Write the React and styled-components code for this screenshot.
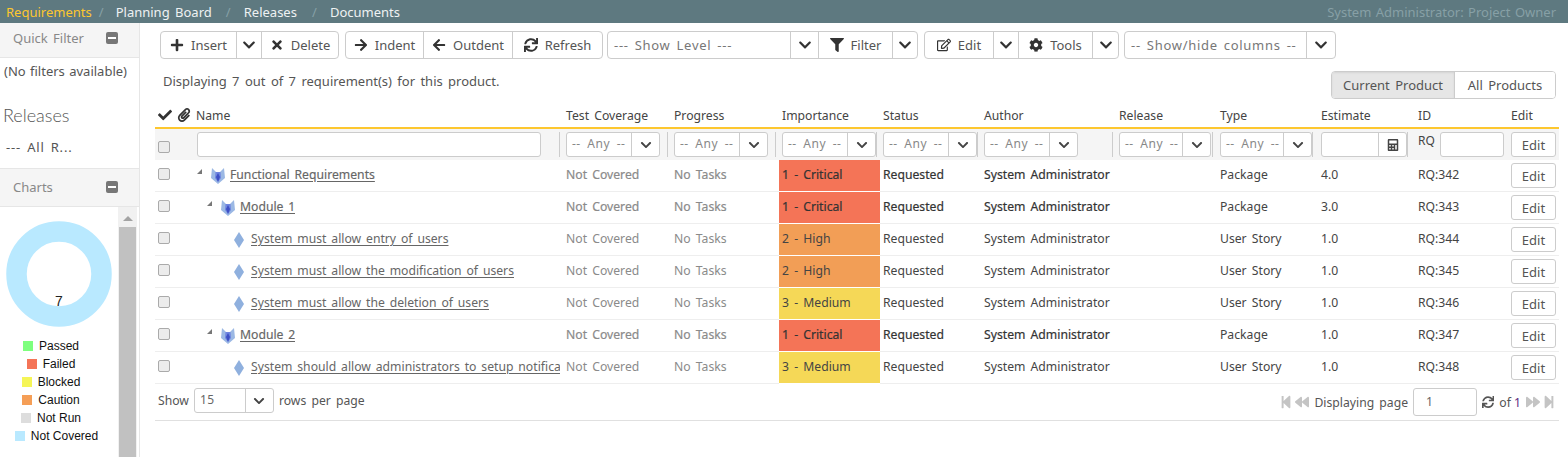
import React from 'react';
import styled, { createGlobalStyle } from 'styled-components';
import {
  FaPlus, FaTimes, FaArrowRight, FaArrowLeft, FaSync, FaFilter, FaRegEdit, FaCog, FaCheck,
  FaPaperclip, FaCalculator, FaStepBackward, FaBackward, FaForward, FaStepForward, FaChevronDown,
} from 'react-icons/fa';

const GlobalStyle = createGlobalStyle`
  html, body { margin: 0; padding: 0; height: 100%; overflow: hidden; background: #fff; }
  body { font-family: "Noto Sans", sans-serif; font-size: 13px; color: #555; word-spacing: 2px; }
  * { box-sizing: border-box; }
`;

const Page = styled.div`
  display: flex;
  flex-direction: column;
  height: 457px;
  overflow: hidden;
`;

const TopBar = styled.div`
  display: flex;
  align-items: center;
  justify-content: space-between;
  flex: 0 0 23px;
  padding: 0 6px;
  background: #5e7980;
  color: #e8eef0;
`;

const Crumbs = styled.div`
  display: flex;
  align-items: center;
`;

const Crumb = styled.span`
  color: ${p => (p.$active ? '#fdc72f' : '#eef2f3')};
`;

const CrumbSep = styled.span`
  color: #86a0a6;
  width: ${p => p.$w}px;
  padding-left: ${p => p.$pl}px;
`;

const UserRole = styled.span`
  color: #87a0a6;
  margin-right: 6px;
  word-spacing: 1px;
`;

const Body = styled.div`
  display: flex;
  flex: 1;
  min-height: 0;
`;

const Sidebar = styled.aside`
  flex: 0 0 140px;
  display: flex;
  flex-direction: column;
  border-right: 1px solid #e6e6e6;
  overflow: hidden;
`;

const PanelHead = styled.div`
  display: flex;
  align-items: center;
  justify-content: space-between;
  flex: 0 0 35px;
  padding: 0 21px 4px 13px;
  background: #f5f5f5;
  border-bottom: 1px solid #e6e6e6;
  color: #888;
`;

const Collapse = styled.span`
  display: flex;
  align-items: center;
  justify-content: center;
  width: 12px;
  height: 12px;
  border-radius: 2px;
  background: #777;
  &::before {
    content: '';
    width: 8px;
    height: 2px;
    background: #fff;
  }
`;

const SideNote = styled.div`
  padding: 4px 0 0 4px;
  height: 36px;
  white-space: nowrap;
  word-spacing: 1px;
`;

const SideTitle = styled.div`
  font-family: "Lato", sans-serif;
  font-weight: 300;
  font-size: 18px;
  padding-left: 3px;
  height: 38px;
  line-height: 42px;
  color: #555;
`;

const ReleasePick = styled.div`
  padding-left: 6px;
  height: 37px;
  line-height: 30px;
  letter-spacing: 0.8px;
  border-bottom: 1px solid #e6e6e6;
`;

const SideGap = styled.div`
  flex: 0 0 3px;
  background: #f5f5f5;
`;

const ChartArea = styled.div`
  display: flex;
  flex: 1;
  min-height: 0;
`;

const ChartBox = styled.div`
  flex: 0 0 118px;
  display: flex;
  flex-direction: column;
  align-items: center;
  padding-top: 14px;
`;

const Legend = styled.div`
  display: flex;
  flex-direction: column;
  align-items: center;
  margin-top: 10px;
  font-family: "Liberation Sans", sans-serif;
  font-size: 12px;
  color: #111;
  word-spacing: 0;
`;

const LegendRow = styled.div`
  display: flex;
  align-items: center;
  gap: 6px;
  height: 18px;
  margin-right: ${p => p.$mr}px;
`;

const Swatch = styled.i`
  width: 10px;
  height: 10px;
  background: ${p => p.$c};
`;

const ScrollTrack = styled.div`
  flex: 0 0 19px;
  display: flex;
  flex-direction: column;
  align-items: center;
  background: #f1f1f1;
  padding-top: 9px;
  &::before {
    content: '';
    border: 5px solid transparent;
    border-top: 0;
    border-bottom: 5px solid #a3a3a3;
  }
`;

const ScrollThumb = styled.div`
  width: 17px;
  flex: 1;
  margin-top: 6px;
  background: #c1c1c1;
`;

const Main = styled.main`
  flex: 1;
  min-width: 0;
  padding: 8px 9px 0 15px;
`;

const Toolbar = styled.div`
  display: flex;
  padding-left: 5px;
`;

const BtnGroup = styled.div`
  display: flex;
  height: 28px;
  margin-left: ${p => p.$ml || 0}px;
  border: 1px solid #ccc;
  border-radius: 4px;
  overflow: hidden;
  background: #fff;
`;

const Btn = styled.div`
  display: flex;
  align-items: center;
  justify-content: center;
  gap: 7px;
  width: ${p => p.$w}px;
  border-left: 1px solid #ccc;
  color: #555;
  white-space: nowrap;
  &:first-child { border-left: 0; }
  svg { color: #333; font-size: 14px; flex: none; }
`;

const Caret = styled(Btn)`
  svg { font-size: 14px; }
`;

const ToolSelect = styled(Btn)`
  justify-content: flex-start;
  padding-left: 6px;
  color: #777;
  letter-spacing: 0.7px;
`;

const InfoRow = styled.div`
  display: flex;
  align-items: flex-start;
  justify-content: space-between;
  height: 44px;
  padding: 13px 3px 0 8px;
`;

const Toggle = styled(BtnGroup)`
  margin-top: -1px;
`;

const ToggleBtn = styled(Btn)`
  background: ${p => (p.$on ? '#e6e6e6' : '#fff')};
  box-shadow: ${p => (p.$on ? 'inset 0 1px 2px rgba(0,0,0,0.08)' : 'none')};
`;

const Table = styled.table`
  width: 1404px;
  table-layout: fixed;
  border-collapse: separate;
  border-spacing: 0;
  font-size: 12.2px;
`;

const Head = styled.th`
  height: 26px;
  padding: 0 3px;
  text-align: left;
  font-weight: 400;
  color: #444;
  border-bottom: 2px solid #fdc72f;
  white-space: nowrap;
  overflow: hidden;
  svg { font-size: 14px; color: #333; margin-right: 5px; vertical-align: -2px; }
`;

const FilterRow = styled.tr`
  background: #f5f5f5;
`;

const FilterTd = styled.td`
  height: 31px;
  padding: 0;
`;

const FilterCell = styled.div`
  display: flex;
  align-items: center;
  gap: ${p => p.$gap || 0}px;
  height: 25px;
  padding-left: ${p => p.$pl ?? 3}px;
  margin-right: ${p => p.$mr ?? 3}px;
  border-right: ${p => (p.$line === false ? 0 : '1px solid #ccc')};
`;

const Checkbox = styled.span`
  display: block;
  width: 12px;
  height: 12px;
  margin: ${p => p.$dy}px 0 0 3px;
  border: 1px solid #aaa;
  border-radius: 2px;
  background: #ececec;
`;

const TextBox = styled.div`
  width: ${p => p.$w}px;
  height: 25px;
  border: 1px solid #ccc;
  border-radius: 3px;
  background: #fff;
`;

const AnySelect = styled.div`
  display: flex;
  width: ${p => p.$w || 94}px;
  height: 25px;
  border: 1px solid #ccc;
  border-radius: 3px;
  background: #fff;
  color: #888;
`;

const AnyLabel = styled.span`
  flex: 1;
  padding-left: 5px;
  line-height: 21px;
  white-space: nowrap;
  overflow: hidden;
  font-size: 12px;
  letter-spacing: 0.5px;
  word-spacing: 3px;
`;

const AnyCaret = styled.span`
  flex: 0 0 28px;
  display: flex;
  align-items: center;
  justify-content: center;
  border-left: 1px solid #ccc;
  color: #444;
  font-size: 12px;
`;

const RqLabel = styled.span`
  color: #444;
  font-size: 12px;
  align-self: flex-start;
`;

const Cell = styled.td`
  height: 32px;
  padding: 0 3px 2px;
  white-space: nowrap;
  overflow: hidden;
  border-bottom: 1px solid #eee;
  color: ${p => (p.$muted ? '#8a8a8a' : p.$strong ? '#333' : '#444')};
  -webkit-text-stroke: ${p => (p.$strong ? '0.2px' : '0')};
`;

const CheckCell = styled(Cell)`
  padding: 0;
`;

const EditCell = styled(Cell)`
  padding: 3px 3px 0;
  vertical-align: top;
`;

const ImportanceCell = styled(Cell)`
  background: ${p => p.$c};
  border-bottom-color: #fff;
`;

const NameWrap = styled.div`
  display: flex;
  align-items: center;
  padding-left: ${p => p.$indent}px;
  overflow: hidden;
`;

const NameLink = styled.span`
  min-width: 0;
  overflow: hidden;
  color: #666;
  text-decoration: underline;
  text-underline-offset: 2px;
  white-space: nowrap;
  word-spacing: 1.7px;
  -webkit-text-stroke: ${p => (p.$strong ? '0.15px' : '0')};
`;

const EditBtn = styled.div`
  display: flex;
  align-items: center;
  justify-content: center;
  width: 45px;
  height: 25px;
  border: 1px solid #ccc;
  border-radius: 3px;
  background: #fff;
  color: #555;
  font-size: 13px;
`;

const Footer = styled.div`
  display: flex;
  align-items: center;
  justify-content: space-between;
  width: 1404px;
  height: 37px;
  padding: 0 3px;
  font-size: 12.2px;
  border-bottom: 1px solid #e0e0e0;
`;

const FootSide = styled.div`
  display: flex;
  align-items: center;
  gap: 5px;
  padding-bottom: ${p => p.$pb || 0}px;
`;

const PageIcons = styled.span`
  display: flex;
  gap: 2px;
  color: #c4c4c4;
  font-size: 14px;
`;

const PageBox = styled.div`
  width: 64px;
  height: 28px;
  padding-left: 12px;
  line-height: 26px;
  border: 1px solid #ccc;
  border-radius: 3px;
  color: #666;
`;

const PageSelect = styled(AnySelect)`
  width: 80px;
  color: #666;
`;

const PageCount = styled.span`
  word-spacing: 0;
`;

const Total = styled.span`
  color: #5c2a82;
`;

const columns = [38, 370, 108, 108, 101, 101, 135, 101, 101, 97, 93, 51];
const heads = ['Test Coverage', 'Progress', 'Importance', 'Status', 'Author', 'Release', 'Type', 'Estimate', 'ID', 'Edit'];

const rows = [
  { name: 'Functional Requirements', kind: 'package', level: 0, imp: '1 - Critical', c: '#f47457', type: 'Package', est: '4.0', id: 'RQ:342' },
  { name: 'Module 1', kind: 'package', level: 1, imp: '1 - Critical', c: '#f47457', type: 'Package', est: '3.0', id: 'RQ:343' },
  { name: 'System must allow entry of users', kind: 'story', imp: '2 - High', c: '#f29e56', type: 'User Story', est: '1.0', id: 'RQ:344' },
  { name: 'System must allow the modification of users', kind: 'story', imp: '2 - High', c: '#f29e56', type: 'User Story', est: '1.0', id: 'RQ:345' },
  { name: 'System must allow the deletion of users', kind: 'story', imp: '3 - Medium', c: '#f5d857', type: 'User Story', est: '1.0', id: 'RQ:346' },
  { name: 'Module 2', kind: 'package', level: 1, imp: '1 - Critical', c: '#f47457', type: 'Package', est: '1.0', id: 'RQ:347' },
  { name: 'System should allow administrators to setup notifica', kind: 'story', imp: '3 - Medium', c: '#f5d857', type: 'User Story', est: '1.0', id: 'RQ:348' },
];

const legend = [
  ['Passed', '#7eff7e', 16],
  ['Failed', '#f47457', 16],
  ['Blocked', '#f5f557', 16],
  ['Caution', '#f59e56', 16],
  ['Not Run', '#dddddd', 16],
  ['Not Covered', '#b9e9ff', 5],
];

const CornerArrow = () => (
  <svg width="5" height="5" viewBox="0 0 5 5" style={{ marginTop: -7, flex: 'none' }}>
    <polygon points="5,0 5,5 0,5" fill="#777" />
  </svg>
);

const PackageIcon = () => (
  <svg width="16" height="18" viewBox="0 0 16 18" style={{ margin: '2px 4px 0 8px', flex: 'none' }}>
    <polygon points="2,1 6,5 10,5 14,1 15,11 8,17 1,11" fill="#9bb8e4" />
    <polygon points="5.5,5 10.5,5 11,11 8,15 5,11" fill="#6f86e0" />
    <polygon points="8,6 10,10 8,15 6,10" fill="#3d4fc4" />
  </svg>
);

const StoryIcon = () => (
  <svg width="10" height="16" viewBox="0 0 10 16" style={{ margin: '2px 7px 0 37px', flex: 'none' }}>
    <polygon points="5,0 10,8 5,16 0,8" fill="#8fb0de" />
  </svg>
);

const Donut = () => (
  <svg width="106" height="106" viewBox="0 0 106 106">
    <circle cx="53" cy="53" r="42.5" fill="none" stroke="#b9e9ff" strokeWidth="20.5" />
    <text x="53" y="85" textAnchor="middle" fontFamily="Liberation Sans" fontSize="14" fill="#222">7</text>
  </svg>
);

const Any = ({ w }) => (
  <AnySelect $w={w}>
    <AnyLabel>-- Any --</AnyLabel>
    <AnyCaret><FaChevronDown /></AnyCaret>
  </AnySelect>
);

export default function App() {
  return (
    <Page>
      <GlobalStyle />
      <TopBar>
        <Crumbs>
          <Crumb $active>Requirements</Crumb>
          <CrumbSep $w={24} $pl={7}>/</CrumbSep>
          <Crumb>Planning Board</Crumb>
          <CrumbSep $w={32} $pl={14}>/</CrumbSep>
          <Crumb>Releases</Crumb>
          <CrumbSep $w={33} $pl={15}>/</CrumbSep>
          <Crumb>Documents</Crumb>
        </Crumbs>
        <UserRole>System Administrator: Project Owner</UserRole>
      </TopBar>
      <Body>
        <Sidebar>
          <PanelHead>Quick Filter<Collapse /></PanelHead>
          <SideNote>(No filters available)</SideNote>
          <SideTitle>Releases</SideTitle>
          <ReleasePick>--- All R...</ReleasePick>
          <SideGap />
          <PanelHead>Charts<Collapse /></PanelHead>
          <ChartArea>
            <ChartBox>
              <Donut />
              <Legend>
                {legend.map(([label, c, mr]) => (
                  <LegendRow key={label} $mr={mr}><Swatch $c={c} />{label}</LegendRow>
                ))}
              </Legend>
            </ChartBox>
            <ScrollTrack><ScrollThumb /></ScrollTrack>
          </ChartArea>
        </Sidebar>
        <Main>
          <Toolbar>
            <BtnGroup>
              <Btn $w={75}><FaPlus />Insert</Btn>
              <Caret $w={25}><FaChevronDown /></Caret>
              <Btn $w={77}><FaTimes />Delete</Btn>
            </BtnGroup>
            <BtnGroup $ml={6}>
              <Btn $w={77}><FaArrowRight />Indent</Btn>
              <Btn $w={89}><FaArrowLeft />Outdent</Btn>
              <Btn $w={90}><FaSync />Refresh</Btn>
            </BtnGroup>
            <BtnGroup $ml={4}>
              <ToolSelect $w={182}>--- Show Level ---</ToolSelect>
              <Caret $w={28}><FaChevronDown /></Caret>
              <Btn $w={74}><FaFilter />Filter</Btn>
              <Caret $w={25}><FaChevronDown /></Caret>
            </BtnGroup>
            <BtnGroup $ml={6}>
              <Btn $w={68}><FaRegEdit />Edit</Btn>
              <Caret $w={25}><FaChevronDown /></Caret>
              <Btn $w={74}><FaCog />Tools</Btn>
              <Caret $w={26}><FaChevronDown /></Caret>
            </BtnGroup>
            <BtnGroup $ml={5}>
              <ToolSelect $w={181}>-- Show/hide columns --</ToolSelect>
              <Caret $w={29}><FaChevronDown /></Caret>
            </BtnGroup>
          </Toolbar>
          <InfoRow>
            <span>Displaying 7 out of 7 requirement(s) for this product.</span>
            <Toggle>
              <ToggleBtn $on $w={122}>Current Product</ToggleBtn>
              <ToggleBtn $w={101}>All Products</ToggleBtn>
            </Toggle>
          </InfoRow>
          <Table>
            <colgroup>
              {columns.map((w, i) => <col key={i} style={{ width: w }} />)}
            </colgroup>
            <thead>
              <tr>
                <Head colSpan={2}><FaCheck /><FaPaperclip />Name</Head>
                {heads.map(h => <Head key={h}>{h}</Head>)}
              </tr>
              <FilterRow>
                <FilterTd><FilterCell $line={false} $pl={0}><Checkbox $dy={4} /></FilterCell></FilterTd>
                <FilterTd><FilterCell $pl={4}><TextBox $w={344} /></FilterCell></FilterTd>
                <FilterTd><FilterCell><Any /></FilterCell></FilterTd>
                <FilterTd><FilterCell><Any /></FilterCell></FilterTd>
                <FilterTd><FilterCell><Any /></FilterCell></FilterTd>
                <FilterTd><FilterCell><Any /></FilterCell></FilterTd>
                <FilterTd><FilterCell><Any /></FilterCell></FilterTd>
                <FilterTd><FilterCell $mr={4}><Any w={92} /></FilterCell></FilterTd>
                <FilterTd><FilterCell $mr={5}><Any w={92} /></FilterCell></FilterTd>
                <FilterTd>
                  <FilterCell $mr={7}>
                    <AnySelect $w={86}>
                      <AnyLabel />
                      <AnyCaret><FaCalculator /></AnyCaret>
                    </AnySelect>
                  </FilterCell>
                </FilterTd>
                <FilterTd>
                  <FilterCell $gap={5} $line={false} $mr={0}>
                    <RqLabel>RQ</RqLabel>
                    <TextBox $w={64} />
                  </FilterCell>
                </FilterTd>
                <FilterTd><FilterCell $line={false} $mr={0}><EditBtn>Edit</EditBtn></FilterCell></FilterTd>
              </FilterRow>
            </thead>
            <tbody>
              {rows.map(r => {
                const strong = r.kind === 'package';
                return (
                  <tr key={r.id}>
                    <CheckCell><Checkbox $dy={-3} /></CheckCell>
                    <Cell>
                      {strong ? (
                        <NameWrap $indent={1 + r.level * 10}>
                          <CornerArrow />
                          <PackageIcon />
                          <NameLink $strong>{r.name}</NameLink>
                        </NameWrap>
                      ) : (
                        <NameWrap $indent={1}>
                          <StoryIcon />
                          <NameLink>{r.name}</NameLink>
                        </NameWrap>
                      )}
                    </Cell>
                    <Cell $muted $strong={strong}>Not Covered</Cell>
                    <Cell $muted $strong={strong}>No Tasks</Cell>
                    <ImportanceCell $c={r.c} $strong={strong}>{r.imp}</ImportanceCell>
                    <Cell $strong={strong}>Requested</Cell>
                    <Cell $strong={strong}>System Administrator</Cell>
                    <Cell />
                    <Cell>{r.type}</Cell>
                    <Cell>{r.est}</Cell>
                    <Cell>{r.id}</Cell>
                    <EditCell><EditBtn>Edit</EditBtn></EditCell>
                  </tr>
                );
              })}
            </tbody>
          </Table>
          <Footer>
            <FootSide $pb={3}>
              Show
              <PageSelect>
                <AnyLabel>15</AnyLabel>
                <AnyCaret><FaChevronDown /></AnyCaret>
              </PageSelect>
              rows per page
            </FootSide>
            <FootSide>
              <PageIcons><FaStepBackward /><FaBackward /></PageIcons>
              Displaying page
              <PageBox>1</PageBox>
              <FaSync />
              <PageCount>of <Total>1</Total></PageCount>
              <PageIcons><FaForward /><FaStepForward /></PageIcons>
            </FootSide>
          </Footer>
        </Main>
      </Body>
    </Page>
  );
}
